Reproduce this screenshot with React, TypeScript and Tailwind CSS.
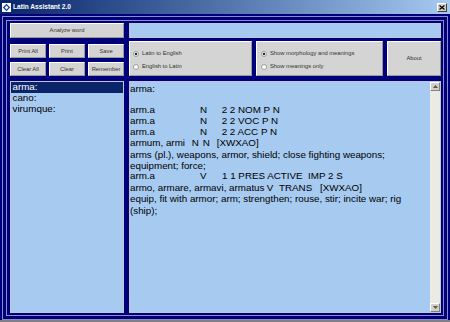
import React from "react";

function Btn({ label, className = "" }: { label: string; className?: string }) {
  return (
    <div
      className={`flex items-center justify-center border border-t-white border-l-white border-b-[#9a9a9a] border-r-[#9a9a9a] bg-[#d4d4d4] text-[5.8px] text-[#333] ${className}`}
    >
      {label}
    </div>
  );
}

function Radio({ label, checked }: { label: string; checked?: boolean }) {
  return (
    <div className="flex h-[6px] items-center gap-[3px] text-[5.8px] text-[#333]">
      <svg width="6" height="6" viewBox="0 0 6 6">
        <circle cx="3" cy="3" r="2.5" fill="#fff" stroke="#8a8a8a" strokeWidth="0.8" />
        {checked && <circle cx="3" cy="3" r="1.2" fill="#222" />}
      </svg>
      <span>{label}</span>
    </div>
  );
}

function Cols({ parts }: { parts: [string, number?][] }) {
  return (
    <div className="flex h-[11.1px] items-center whitespace-pre">
      {parts.map(([t, w], i) => (
        <span key={i} className="shrink-0" style={w ? { width: w } : undefined}>
          {t}
        </span>
      ))}
    </div>
  );
}

function Line({ text }: { text: string }) {
  return <div className="h-[11.1px] whitespace-pre leading-[11.1px]">{text}</div>;
}

export default function App() {
  return (
    <div className="flex h-[322px] w-[450px] flex-col overflow-hidden bg-[#00007b] font-['Liberation_Sans',Arial,sans-serif]">
      {/* Title bar */}
      <div className="flex h-[14px] shrink-0 items-center bg-gradient-to-r from-[#0a246a] to-[#a6caf0] pl-[2px] pr-[3px]">
        <svg width="9" height="9" viewBox="0 0 9 9">
          <rect x="0" y="0" width="9" height="9" fill="#fff" />
          <path d="M4.5 0.8 L8.2 4.5 L4.5 8.2 L0.8 4.5 Z" fill="#1c3fa8" />
          <path d="M4.5 2.6 L6.4 4.5 L4.5 6.4 L2.6 4.5 Z" fill="#fff" />
        </svg>
        <span className="ml-[2px] text-[6.6px] font-bold text-white">Latin Assistant 2.0</span>
        <div className="ml-auto flex h-[9px] w-[10px] items-center justify-center border border-t-white border-l-white border-b-[#404040] border-r-[#404040] bg-[#d4d0c8]">
          <svg width="6" height="5" viewBox="0 0 6 5">
            <path d="M0.5 0.5 L5.5 4.5 M5.5 0.5 L0.5 4.5" stroke="#000" strokeWidth="1.2" />
          </svg>
        </div>
      </div>

      {/* Window body */}
      <div className="flex flex-1 flex-col border-b-2 border-[#808080] px-[2px] pt-[2px]">
        <div className="flex flex-1 flex-col border border-[#8c8cc8] p-[3px]">
          <div className="flex flex-1 flex-col border border-[#8c8cc8] p-[2px] pl-[3px]">
            {/* Row 1 */}
            <div className="flex h-[15px] gap-[5px]">
              <Btn label="Analyze word" className="w-[114px]" />
              <div className="flex-1 border border-[#c4c4dc] bg-[#a6caf0]" />
            </div>

            {/* Row 2 */}
            <div className="mt-[3px] flex h-[35px] gap-[5px]">
              <div className="flex w-[114px] flex-col justify-end gap-[4px]">
                <div className="grid h-[14px] grid-cols-3 gap-[3px]">
                  <Btn label="Print All" />
                  <Btn label="Print" />
                  <Btn label="Save" />
                </div>
                <div className="grid h-[14px] grid-cols-3 gap-[3px]">
                  <Btn label="Clear All" />
                  <Btn label="Clear" />
                  <Btn label="Remember" />
                </div>
              </div>
              <div className="flex flex-1 gap-[4px]">
                <div className="flex w-[123px] flex-col justify-center gap-[7px] border border-t-white border-l-white border-b-[#9a9a9a] border-r-[#9a9a9a] bg-[#d4d4d4] pl-[3px] pt-[3px]">
                  <Radio label="Latin to English" checked />
                  <Radio label="English to Latin" />
                </div>
                <div className="flex w-[127px] flex-col justify-center gap-[7px] border border-t-white border-l-white border-b-[#9a9a9a] border-r-[#9a9a9a] bg-[#d4d4d4] pl-[4px] pt-[3px]">
                  <Radio label="Show morphology and meanings" checked />
                  <Radio label="Show meanings only" />
                </div>
                <Btn label="About" className="flex-1" />
              </div>
            </div>

            {/* Row 3 */}
            <div className="mt-[5px] flex flex-1 gap-[5px] text-[9.8px] text-black">
              <div className="w-[114px] border border-[#c4c4dc] bg-[#a6caf0]">
                <div className="h-[10.9px] bg-[#0a246a] pl-[1.5px] leading-[10.9px] text-white">arma:</div>
                <div className="h-[10.9px] pl-[1.5px] leading-[10.9px]">cano:</div>
                <div className="h-[10.9px] pl-[1.5px] leading-[10.9px]">virumque:</div>
              </div>
              <div className="flex flex-1 border border-[#c4c4dc] bg-[#a6caf0]">
                <div className="flex-1 pt-[0.5px]">
                  <Line text="arma:" />
                  <Line text="" />
                  <Cols parts={[["arm.a", 70], ["N", 21.7], ["2 2 NOM P N"]]} />
                  <Cols parts={[["arm.a", 70], ["N", 21.7], ["2 2 VOC P N"]]} />
                  <Cols parts={[["arm.a", 70], ["N", 21.7], ["2 2 ACC P N"]]} />
                  <Cols parts={[["armum, armi", 61.7], ["N", 11], ["N", 14], ["[XWXAO]"]]} />
                  <Line text="arms (pl.), weapons, armor, shield; close fighting weapons;" />
                  <Line text="equipment; force;" />
                  <Cols parts={[["arm.a", 70], ["V", 22], ["1 1 PRES ACTIVE  IMP 2 S"]]} />
                  <Cols parts={[["armo, armare, armavi, armatus", 136.7], ["V", 12.3], ["TRANS", 41], ["[XWXAO]"]]} />
                  <Line text="equip, fit with armor; arm; strengthen; rouse, stir; incite war; rig" />
                  <Line text="(ship);" />
                </div>
                {/* Scrollbar */}
                <div className="flex w-[10px] flex-col justify-between bg-[#eceae4]">
                  <div className="flex h-[9px] items-center justify-center border border-t-white border-l-white border-b-[#808080] border-r-[#808080] bg-[#d4d0c8]">
                    <svg width="5" height="3" viewBox="0 0 5 3">
                      <path d="M2.5 0 L5 3 L0 3 Z" fill="#555" />
                    </svg>
                  </div>
                  <div className="flex h-[9px] items-center justify-center border border-t-white border-l-white border-b-[#808080] border-r-[#808080] bg-[#d4d0c8]">
                    <svg width="5" height="3" viewBox="0 0 5 3">
                      <path d="M0 0 L5 0 L2.5 3 Z" fill="#555" />
                    </svg>
                  </div>
                </div>
              </div>
            </div>
          </div>
        </div>
      </div>
    </div>
  );
}
